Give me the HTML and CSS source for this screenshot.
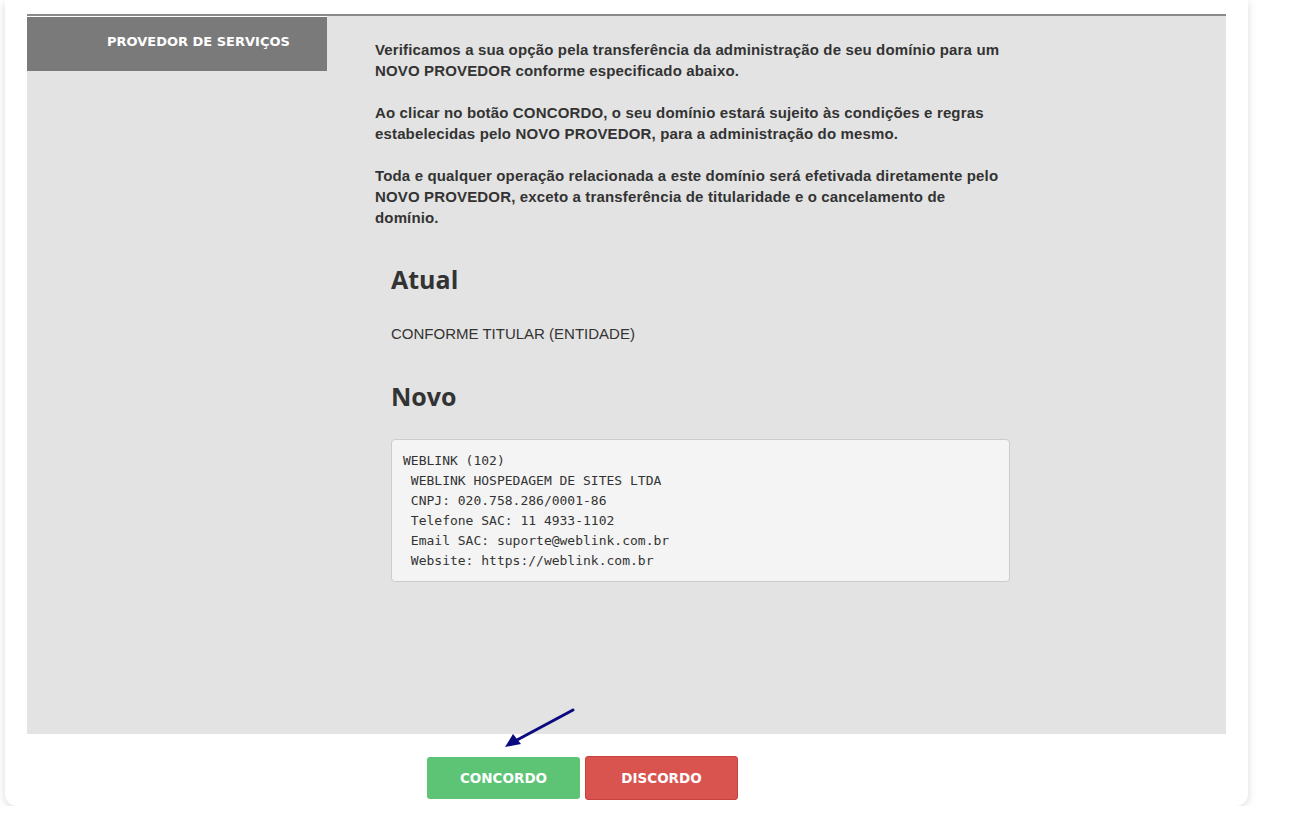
FILE: index.html
```html
<!DOCTYPE html>
<html lang="pt-BR">
<head>
<meta charset="utf-8">
<title>Provedor de Serviços</title>
<link rel="stylesheet" href="styles.css">
</head>
<body>
<div class="card">
  <div class="panel">
    <div class="label">PROVEDOR DE SERVIÇOS</div>
    <div class="content">
      <p>Verificamos a sua opção pela transferência da administração de seu domínio para um NOVO PROVEDOR conforme especificado abaixo.</p>
      <p>Ao clicar no botão CONCORDO, o seu domínio estará sujeito às condições e regras estabelecidas pelo NOVO PROVEDOR, para a administração do mesmo.</p>
      <p>Toda e qualquer operação relacionada a este domínio será efetivada diretamente pelo NOVO PROVEDOR, exceto a transferência de titularidade e o cancelamento de domínio.</p>
      <div class="details">
        <h3>Atual</h3>
        <div class="plain">CONFORME TITULAR (ENTIDADE)</div>
        <h3>Novo</h3>
        <pre class="code">WEBLINK (102)
 WEBLINK HOSPEDAGEM DE SITES LTDA
 CNPJ: 020.758.286/0001-86
 Telefone SAC: 11 4933-1102
 Email SAC: suporte@weblink.com.br
 Website: https://weblink.com.br</pre>
      </div>
    </div>
  </div>
  <div class="actions">
    <button class="btn btn-ok">CONCORDO</button>
    <button class="btn btn-no">DISCORDO</button>
  </div>
  <svg class="arrow" width="80" height="44" viewBox="0 0 80 44">
    <line x1="71" y1="3" x2="15" y2="33" stroke="#0a0a80" stroke-width="3" stroke-linecap="round"/>
    <polygon points="3,40 11,27 19,37" fill="#0a0a80"/>
  </svg>
</div>
</body>
</html>
```
FILE: styles.css
```css
html, body {
  margin: 0;
  padding: 0;
  background: #ffffff;
}
body {
  font-family: "Liberation Sans", Arial, sans-serif;
  color: #333;
}
.card {
  position: relative;
  margin-left: 5px;
  width: 1243px;
  height: 806px;
  box-sizing: border-box;
  padding: 14px 22px 0 22px;
  background: #fff;
  border-radius: 0 0 12px 12px;
  box-shadow: 0 2px 8px rgba(0, 0, 0, 0.15);
}
.panel {
  display: flex;
  height: 720px;
  box-sizing: border-box;
  background: #e3e3e3;
  border-top: 2px solid #8a8a8a;
}
.label {
  width: 300px;
  height: 55px;
  box-sizing: border-box;
  flex: none;
  border-top: 1px solid #fff;
  background: #7a7a7a;
  color: #fff;
  font-family: "DejaVu Sans", sans-serif;
  font-weight: 700;
  font-size: 13px;
  padding: 17px 0 0 80px;
}
.content {
  margin-left: 48px;
  width: 640px;
  padding-top: 23px;
}
.content p {
  max-width: 630px;
  margin: 0 0 21px 0;
  font-size: 15px;
  letter-spacing: 0.15px;
  line-height: 21px;
  font-weight: 700;
  color: #333;
}
.details {
  padding: 0 5px 0 16px;
}
.details h3 {
  font-family: "Open Sans", sans-serif;
  font-weight: 700;
  font-size: 25px;
  line-height: 30px;
  margin: 0;
  color: #333;
}
.details h3:first-child {
  margin-top: 36px;
}
.plain {
  font-size: 15px;
  line-height: 21px;
  margin: 29px 0 37px 0;
  color: #333;
}
.code {
  margin: 28px 0 0 0;
  padding: 11px 11px 10px 11px;
  background: #f4f4f4;
  border: 1px solid #ccc;
  border-radius: 4px;
  font-family: "DejaVu Sans Mono", monospace;
  font-size: 13px;
  line-height: 20px;
  color: #333;
}
.actions {
  display: flex;
  align-items: center;
  gap: 5px;
  margin-top: 22px;
  padding-left: 400px;
}
.btn {
  width: 153px;
  height: 43px;
  border: none;
  border-radius: 3px;
  color: #fff;
  font-family: "DejaVu Sans", sans-serif;
  font-weight: 700;
  font-size: 13.5px;
  cursor: pointer;
}
.btn-ok {
  background: #5cc474;
  height: 42px;
}
.btn-no {
  background: #d9534f;
  height: 44px;
  border: 1px solid #c9403c;
}
.arrow {
  position: absolute;
  left: 497px;
  top: 707px;
}
```
